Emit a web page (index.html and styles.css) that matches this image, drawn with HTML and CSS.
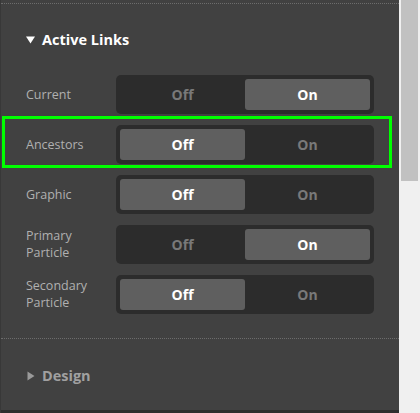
FILE: index.html
```html
<!DOCTYPE html>
<html>
<head>
<meta charset="utf-8">
<link rel="stylesheet" href="styles.css">
</head>
<body>
<div class="frame">
  <div class="panel">
    <div class="section-head active">
      <svg class="caret" width="9" height="8" viewBox="0 0 9 8"><path d="M0 0.5 H9 L4.5 7.5 Z" fill="#ffffff"/></svg>
      <span>Active Links</span>
    </div>
    <div class="rows">
      <div class="row">
        <div class="label">Current</div>
        <div class="toggle"><div class="opt">Off</div><div class="opt on">On</div></div>
      </div>
      <div class="row highlighted">
        <div class="label">Ancestors</div>
        <div class="toggle"><div class="opt on">Off</div><div class="opt">On</div></div>
      </div>
      <div class="row">
        <div class="label">Graphic</div>
        <div class="toggle"><div class="opt on">Off</div><div class="opt">On</div></div>
      </div>
      <div class="row">
        <div class="label">Primary<br>Particle</div>
        <div class="toggle"><div class="opt">Off</div><div class="opt on">On</div></div>
      </div>
      <div class="row">
        <div class="label">Secondary<br>Particle</div>
        <div class="toggle"><div class="opt on">Off</div><div class="opt">On</div></div>
      </div>
    </div>
    <div class="section-head collapsed">
      <svg class="caret" width="8" height="10" viewBox="0 0 8 10"><path d="M0.5 0.5 V9.5 L7.5 5 Z" fill="#9a9a9a"/></svg>
      <span>Design</span>
    </div>
    <div class="bottom-bar"></div>
  </div>
  <div class="scrollbar"><div class="thumb"></div></div>
</div>
</body>
</html>
```
FILE: styles.css
```css
html, body {
  margin: 0;
  padding: 0;
  background: #f0f0f0;
}
body {
  font-family: "Open Sans", "Noto Sans", sans-serif;
}
.frame {
  display: flex;
  width: 420px;
  height: 413px;
  overflow: hidden;
}
.panel {
  width: 399px;
  height: 413px;
  background: #414141;
  border-left: 1px solid #383838;
  padding-top: 3px;
  box-sizing: border-box;
  display: flex;
  flex-direction: column;
}
.section-head {
  display: flex;
  align-items: center;
  gap: 7px;
  padding-left: 25px;
  font-weight: 700;
  font-size: 14.5px;
  line-height: 20px;
}
.section-head.active {
  border-top: 1px dotted #6c6c6c;
  padding-top: 26px;
  padding-bottom: 19px;
  color: #ffffff;
}
.section-head.collapsed {
  border-top: 1px dotted #6c6c6c;
  margin-top: 19px;
  padding-top: 27px;
  padding-bottom: 23px;
  color: #a0a0a0;
}
.section-head.collapsed .caret {
  margin-left: 1px;
}
.rows {
  display: flex;
  flex-direction: column;
}
.row {
  position: relative;
  display: flex;
  align-items: center;
  height: 50px;
  padding: 0 24px 0 25px;
  box-sizing: border-box;
}
.row.highlighted::after {
  content: "";
  position: absolute;
  top: -3px;
  bottom: 1px;
  left: 1px;
  right: 7px;
  border: 3px solid #00ff00;
  pointer-events: none;
}
.label {
  width: 90px;
  font-size: 12.5px;
  line-height: 17px;
  color: #b0b0b0;
}
.toggle {
  display: flex;
  width: 258px;
  height: 39px;
  padding: 4px;
  box-sizing: border-box;
  background: #2c2c2c;
  border-radius: 5px;
}
.opt {
  flex: 1;
  display: flex;
  align-items: center;
  justify-content: center;
  font-size: 14px;
  font-weight: 700;
  color: #797979;
  border-radius: 3px;
}
.opt.on {
  background: #5f5f5f;
  color: #ffffff;
}
.bottom-bar {
  margin-top: auto;
  height: 3px;
  background: #2e2e2e;
}
.scrollbar {
  width: 21px;
  height: 413px;
  background: #f0f0f0;
  padding: 0 2px;
  box-sizing: border-box;
}
.thumb {
  height: 181px;
  background: #c1c1c1;
}
```
